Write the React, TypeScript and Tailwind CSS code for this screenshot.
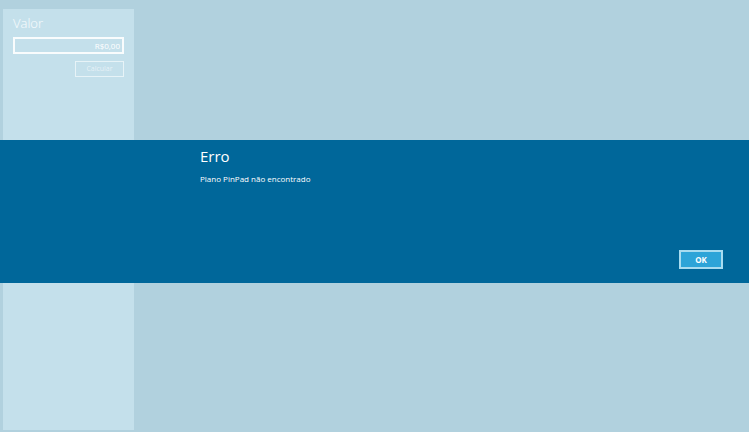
export default function App() {
  return (
    <div
      className="relative h-[432px] w-full overflow-hidden bg-[#b1d1de] pl-[3px] pt-[9px]"
      style={{ fontFamily: '"Open Sans", "Noto Sans", Arial, sans-serif' }}
    >
      <div className="h-[421px] w-[131px] bg-[#c4e0eb] px-[10px] pt-[6px]">
        <div className="text-[13px] font-light leading-[16px] text-white/90">Valor</div>
        <div className="mt-[6px] flex h-[17px] items-center justify-end border-2 border-white/90 pr-[2px] text-[8px] text-white">
          R$0,00
        </div>
        <div className="mt-[7px] flex justify-end">
          <button
            type="button"
            className="flex h-[16px] w-[49px] items-center justify-center border border-white/60 text-[7px] text-white/60"
          >
            Calcular
          </button>
        </div>
      </div>

      <div className="absolute left-0 right-0 top-[140px] flex h-[143px] flex-col bg-[#00679a] pb-[14px] pl-[200px] pr-[26px] pt-[6px] text-white">
        <div className="text-[15px] leading-[20px]">Erro</div>
        <div className="mt-[7px] text-[8px] leading-[11px]">Plano PinPad não encontrado</div>
        <div className="mt-auto flex justify-end">
          <button
            type="button"
            className="flex h-[19px] w-[44px] items-center justify-center border-2 border-[#a8dcf0] bg-[#2da4d8] text-[8px] font-bold text-white"
          >
            OK
          </button>
        </div>
      </div>
    </div>
  );
}
